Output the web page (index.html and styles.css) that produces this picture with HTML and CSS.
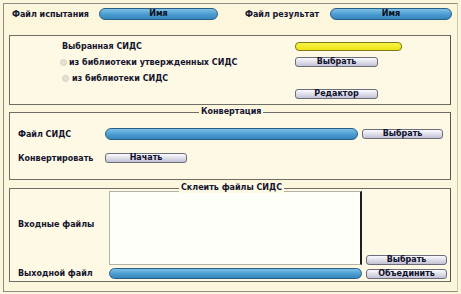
FILE: index.html
```html
<!DOCTYPE html>
<html>
<head>
<meta charset="utf-8">
<link rel="stylesheet" href="styles.css">
</head>
<body>
<div class="window">
  <div class="toprow">
    <span class="lbl lbl-test">Файл испытания</span>
    <div class="field blue f-test">Имя</div>
    <span class="lbl lbl-res">Файл результат</span>
    <div class="field blue f-res">Имя</div>
  </div>

  <div class="box box1">
    <div class="grid1">
      <span class="lbl sel">Выбранная СИДС</span>
      <div class="field yellow"></div>
      <label class="radio"><span class="dot"></span>из библиотеки утвержденных СИДС</label>
      <div class="btn b83">Выбрать</div>
      <label class="radio r2"><span class="dot"></span>из библиотеки СИДС</label>
      <span></span>
      <span></span>
      <div class="btn b83">Редактор</div>
    </div>
  </div>

  <div class="box box2">
    <span class="legend leg2">Конвертация</span>
    <div class="row r-file">
      <span class="lbl col-l">Файл СИДС</span>
      <div class="field blue wide"></div>
      <div class="btn b81">Выбрать</div>
    </div>
    <div class="row r-conv">
      <span class="lbl col-l">Конвертировать</span>
      <div class="btn b82">Начать</div>
    </div>
  </div>

  <div class="box box3">
    <span class="legend leg3">Склеить файлы СИДС</span>
    <div class="grid3">
      <span class="lbl col-l in-lbl">Входные файлы</span>
      <div class="listbox"></div>
      <div class="btn b81 sel-btn">Выбрать</div>
      <span class="lbl col-l">Выходной файл</span>
      <div class="field blue wide out"></div>
      <div class="btn b81 join">Объединить</div>
    </div>
  </div>
</div>
</body>
</html>
```

FILE: styles.css
```css
* { box-sizing: border-box; }
html, body {
  margin: 0;
  padding: 0;
  background: #fbf6dc;
}
body {
  width: 461px;
  height: 294px;
  overflow: hidden;
  font-family: "DejaVu Sans", "Liberation Sans", sans-serif;
  font-size: 8px;
  font-weight: bold;
  color: #14142e;
}
.window {
  margin: 3px 0 0 3px;
  width: 455px;
  height: 289px;
  border: 1px solid #8d8c80;
  border-right-color: #c8c6b4;
  padding: 0 0 0 5px;
}
.toprow {
  display: flex;
  align-items: center;
  height: 20px;
  padding-left: 3px;
}
.lbl { white-space: nowrap; }
.lbl-test { width: 87px; }
.lbl-res { width: 85px; margin-left: 27px; }
.f-test { width: 119px; }
.f-res { width: 122px; }

.field {
  height: 12px;
  display: flex;
  align-items: center;
  justify-content: center;
  line-height: 1;
}
.blue {
  border: 1px solid #2b5f85;
  border-radius: 6px;
  background: linear-gradient(#7cc0e8, #4a9ccf 55%, #3585bd);
  color: #0b1020;
}
.yellow {
  width: 107px;
  height: 9px;
  border: 1px solid #7d7a1a;
  border-radius: 4px;
  background: linear-gradient(#f8f248, #eee414);
}

.box {
  position: relative;
  width: 442px;
  border: 1px solid #6f6e66;
  border-right-color: #55544e;
  background: #fdf9e4;
}
.box1 {
  margin-top: 11px;
  padding: 2px 0 2px 50px;
}
.grid1 {
  display: grid;
  grid-template-columns: 235px auto;
  grid-auto-rows: 16px;
  align-items: center;
}
.sel { padding-left: 2px; }
.radio {
  display: flex;
  align-items: center;
  gap: 2px;
  white-space: nowrap;
}
.r2 { padding-left: 2px; gap: 3px; }
.dot {
  width: 7px;
  height: 7px;
  border-radius: 50%;
  background: #e4e2d6;
  border: 1px solid #d2d0c2;
}

.btn {
  height: 10px;
  display: flex;
  align-items: center;
  justify-content: center;
  border: 1px solid #6c6c7c;
  border-radius: 3px;
  background: linear-gradient(#fafaff, #dedeea 50%, #c2c2d4);
  color: #10102a;
  font-size: 8px;
  line-height: 1;
}
.b83 { width: 83px; }
.b81 { width: 81px; }
.b82 { width: 82px; }

.legend {
  position: absolute;
  top: -6px;
  padding: 0 2px;
  background: #fdf9e4;
  line-height: 10px;
  white-space: nowrap;
}
.leg2 { left: 189px; }
.leg3 { left: 169px; }

.box2 {
  margin-top: 7px;
  padding: 15px 0 16px 8px;
  display: flex;
  flex-direction: column;
  gap: 13px;
}
.row {
  display: flex;
  align-items: center;
}
.r-file { height: 12px; }
.r-conv { height: 10px; }
.col-l { width: 87px; }
.wide { width: 253px; }
.r-file .btn { margin-left: 4px; }

.box3 {
  margin-top: 8px;
  padding: 2px 0 2px 8px;
}
.grid3 {
  display: grid;
  grid-template-columns: 87px 253px 81px;
  column-gap: 4px;
  grid-template-rows: 74px 11px;
  row-gap: 3px;
  align-items: center;
}
.in-lbl { align-self: center; margin-top: -8px; }
.listbox {
  height: 74px;
  background: #fffffa;
  border: 1px solid #b4b2a4;
  border-right: 2px solid #1e1e1e;
}
.sel-btn { align-self: end; margin-bottom: 0; }
.out { height: 11px; }
.join { height: 10px; }
```
